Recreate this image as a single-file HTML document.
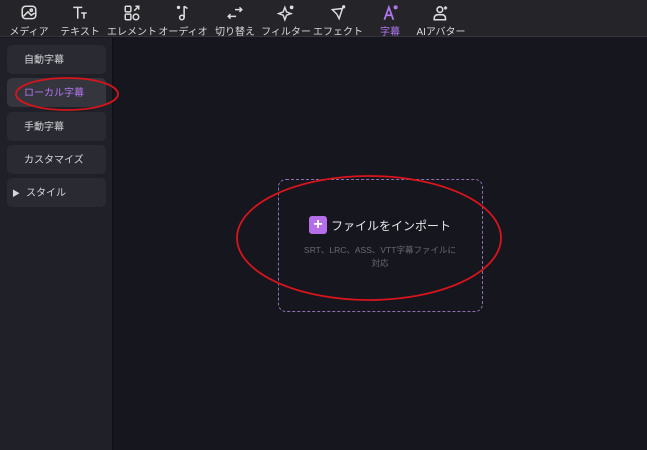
<!DOCTYPE html>
<html><head><meta charset="utf-8"><style>
*{margin:0;padding:0;box-sizing:border-box}
body{width:647px;height:450px;overflow:hidden;background:#16161e;font-family:"Liberation Sans","Noto Sans CJK JP",sans-serif;position:relative}
.top{position:absolute;left:0;top:0;width:647px;height:37px;background:#242429;border-bottom:1px solid #34343a}
.tab{position:absolute;top:0;width:52px;text-align:center;color:#d8d8dc;font-size:10px}
.tab svg{position:absolute;left:17px;top:4px}
.tab span{position:absolute;left:-10px;right:-10px;top:23px;white-space:nowrap}
.side{position:absolute;left:0;top:38px;width:114px;height:412px;background:#202128;border-right:2px solid #111117}
.btn{position:absolute;left:7px;width:99px;height:29px;background:#2a2b32;border-radius:5px;color:#d6d6da;font-size:10px;line-height:31px;padding-left:17px}
.box{position:absolute;left:278px;top:179px;width:205px;height:133px;border:1px dashed #8e6fb0;border-radius:8px}
</style></head><body>
<div class="top">
<div class="tab" style="left:3px"><svg width="18" height="18" viewBox="0 0 16 16" fill="none" stroke="#ddd" stroke-width="1.4"><rect x="2" y="2" width="12" height="11" rx="3"/><path d="M3 11l4-4 3 3 3-2"/><circle cx="10" cy="5.5" r="1"/></svg><span>メディア</span></div>
<div class="tab" style="left:54px"><svg width="18" height="18" viewBox="0 0 16 16" fill="none" stroke="#ddd" stroke-width="1.4"><path d="M2 3h8M6 3v10M9 8h5M11.5 8v5"/></svg><span>テキスト</span></div>
<div class="tab" style="left:106px"><svg width="18" height="18" viewBox="0 0 16 16" fill="none" stroke="#ddd" stroke-width="1.3"><rect x="2" y="2" width="5" height="5" rx="1"/><rect x="2" y="9" width="5" height="5" rx="1"/><circle cx="11.5" cy="11.5" r="2.5"/><path d="M10 6l4-4M11 2h3v3"/></svg><span>エレメント</span></div>
<div class="tab" style="left:157px"><svg width="18" height="18" viewBox="0 0 16 16" fill="none" stroke="#ddd" stroke-width="1.4"><path d="M9 2v10"/><circle cx="7" cy="12" r="2"/><path d="M9 2l3 2"/><circle cx="4" cy="3" r=".8" fill="#ddd"/></svg><span>オーディオ</span></div>
<div class="tab" style="left:209px"><svg width="18" height="18" viewBox="0 0 16 16" fill="none" stroke="#ddd" stroke-width="1.4"><path d="M4 9l-2 2 2 2M2 11h7M12 3l2 2-2 2M14 5H8"/></svg><span>切り替え</span></div>
<div class="tab" style="left:260px"><svg width="18" height="18" viewBox="0 0 16 16" fill="none" stroke="#ddd" stroke-width="1.3"><path d="M7 3l1.5 4 4 1.5-4 1.5L7 14l-1.5-4-4-1.5 4-1.5z"/><circle cx="13" cy="3" r="1" fill="#ddd"/></svg><span>フィルター</span></div>
<div class="tab" style="left:312px"><svg width="18" height="18" viewBox="0 0 16 16" fill="none" stroke="#ddd" stroke-width="1.3"><path d="M3 5l9 -1-3 9-2-4z"/><circle cx="13" cy="2.5" r=".8" fill="#ddd"/></svg><span>エフェクト</span></div>
<div class="tab" style="left:364px;color:#b277f0"><svg width="18" height="18" viewBox="0 0 16 16" fill="none" stroke="#b277f0" stroke-width="1.6"><path d="M3 14l4-11 4 11M4.5 10h5"/><circle cx="13" cy="3" r="1" fill="#b277f0"/></svg><span>字幕</span></div>
<div class="tab" style="left:415px"><svg width="18" height="18" viewBox="0 0 16 16" fill="none" stroke="#ddd" stroke-width="1.4"><circle cx="7" cy="5" r="2.5"/><path d="M2 14v-1.5a3 3 0 013-3h4a3 3 0 013 3V14z"/><path d="M12 2v3M10.5 3.5h3"/></svg><span>AIアバター</span></div>
</div>
<div class="side">
<div class="btn" style="top:7px">自動字幕</div>
<div class="btn" style="top:40px;background:#34353d;color:#b277f0">ローカル字幕</div>
<div class="btn" style="top:74px">手動字幕</div>
<div class="btn" style="top:107px">カスタマイズ</div>
<div class="btn" style="top:140px;padding-left:5px"><span style="font-size:8px;margin-right:6px">▶</span>スタイル</div>
</div>
<div class="box"></div>
<div style="position:absolute;left:309px;top:216px;width:18px;height:18px;background:#b36ee8;border-radius:3px;color:#fff;font-size:16px;line-height:18px;text-align:center;font-weight:bold">+</div>
<div style="position:absolute;left:331px;top:217px;color:#e6e6ea;font-size:12px">ファイルをインポート</div>
<div style="position:absolute;left:290px;top:244px;width:180px;text-align:center;color:#6a6a74;font-size:8.5px;line-height:13px">SRT、LRC、ASS、VTT字幕ファイルに<br>対応</div>
<svg width="647" height="450" style="position:absolute;left:0;top:0" fill="none" stroke="#d8141c" stroke-width="1.8"><ellipse cx="67" cy="94" rx="51" ry="16"/><ellipse cx="369" cy="238" rx="132" ry="62"/></svg>
</body></html>
